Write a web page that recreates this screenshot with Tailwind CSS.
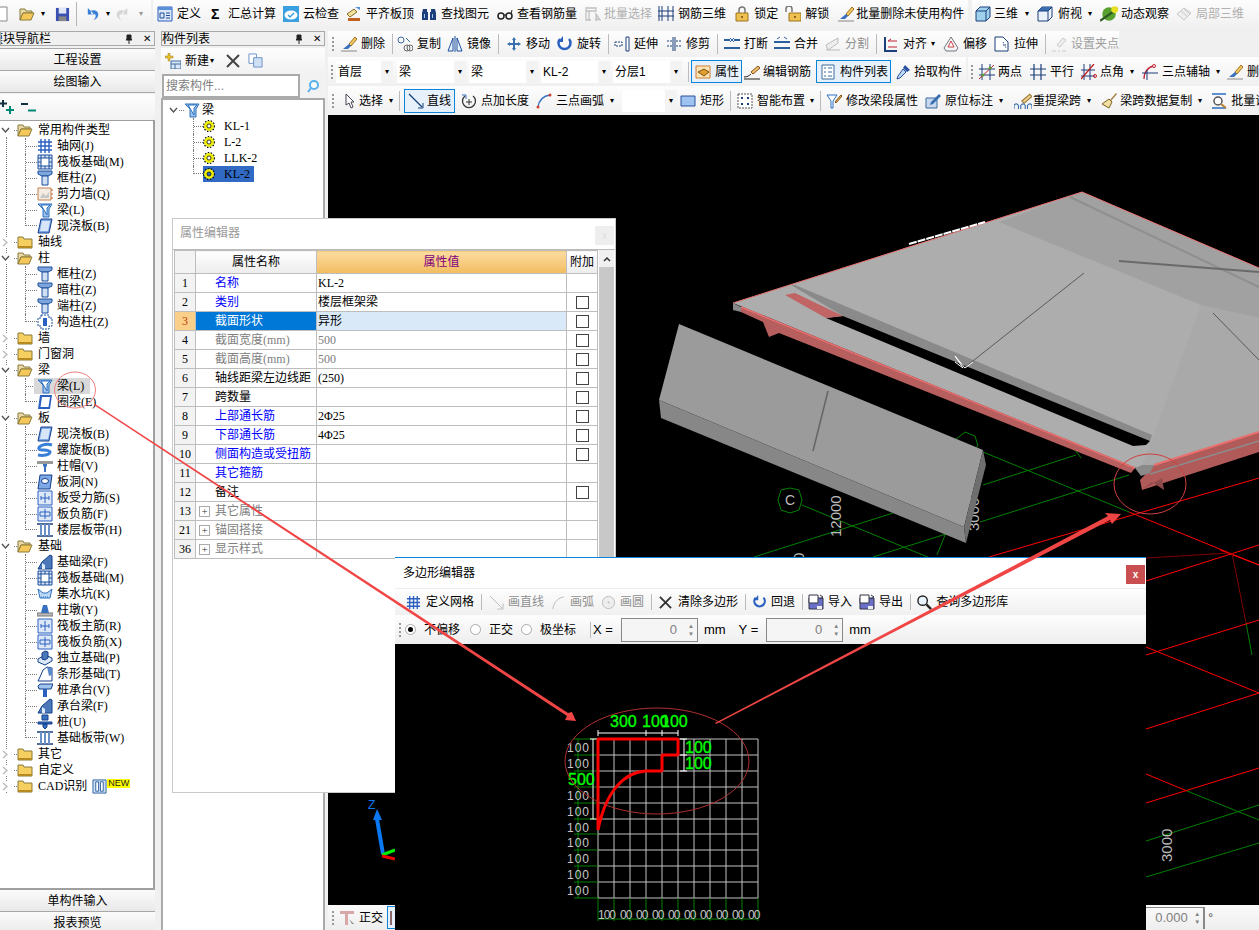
<!DOCTYPE html>
<html lang="zh">
  <head>
    <meta charset="UTF-8" />
    <title>钢筋算量</title>
    <script src="https://cdn.jsdelivr.net/npm/@tailwindcss/browser@4"></script>
  </head>

  <body class="bg-[#f0f0f0] text-[12px] leading-4 text-black font-['Liberation_Sans','Noto_Sans_CJK_SC',sans-serif]">
    <!-- Icon sprites -->
    <svg class="hidden">
      <symbol id="folder" viewBox="0 0 16 16"><path d="M1 3h5l1 2h8v9H1z" fill="#f5cf5f" stroke="#8a7a3a"/><path d="M1 12h14v2H1z" fill="#b58a20"/></symbol>
      <symbol id="folderopen" viewBox="0 0 16 16"><path d="M1 3h5l1 2h6v2H4l-3 7z" fill="#e8d9a8" stroke="#8a7a3a"/><path d="M4 7h11l-3 7H1z" fill="#f3c858" stroke="#8a7a3a"/></symbol>
      <symbol id="grid" viewBox="0 0 16 16"><path d="M1 4h14M1 8h14M1 12h14M4 1v14M8 1v14M12 1v14" stroke="#2a60c0" stroke-width="1.4" fill="none"/></symbol>
      <symbol id="raft" viewBox="0 0 16 16"><path d="M1 1h14v14H1z" fill="#dce8f8" stroke="#1c4f9c"/><path d="M4 4h8v8H4z" fill="#fff" stroke="#1c4f9c"/><path d="M1 4h3M1 8h3M1 12h3M12 4h3M12 8h3M12 12h3M4 1v3M8 1v3M12 1v3M4 12v3M8 12v3M12 12v3" stroke="#1c4f9c"/></symbol>
      <symbol id="col" viewBox="0 0 16 16"><path d="M1 1h14v3l-4 2H5L1 4z" fill="#7ea6dc" stroke="#1c4f9c"/><path d="M5 6h6v9H5z" fill="#cfe0f5" stroke="#1c4f9c"/></symbol>
      <symbol id="wall" viewBox="0 0 16 16"><path d="M1 2h13v12H1z" fill="#f4ece2" stroke="#c08050"/><path d="M3 12l3-5 3 3 3-4v6z" fill="#c8c8c8"/><path d="M14 4h2M14 8h2M14 12h2" stroke="#d06020"/></symbol>
      <symbol id="beam" viewBox="0 0 16 16"><path d="M1 2h14l-3 5v8H6V7z" fill="#9fc3ea" stroke="#2a70c0"/><path d="M4 3l6 10V6l3-3z" fill="#fff" stroke="#2a70c0"/></symbol>
      <symbol id="slab" viewBox="0 0 16 16"><path d="M4 1h11l-3 14H1z" fill="#7ea9e6" stroke="#123f8c"/><path d="M5 3h8l-2 10H3z" fill="#d8e6fa"/></symbol>
      <symbol id="gcol" viewBox="0 0 16 16"><path d="M4 1h8v3h3v8h-3v3H4v-3H1V4h3z" fill="#fff" stroke="#1c4f9c" stroke-dasharray="2 1"/><path d="M6 4h4v8H6z" fill="#2a60c0"/></symbol>
      <symbol id="ring" viewBox="0 0 16 16"><path d="M3 1h12l-2 14H1z" fill="#2a60c0"/><path d="M5 3h8l-1.500 10H3.500z" fill="#fff"/></symbol>
      <symbol id="spiral" viewBox="0 0 16 16"><path d="M15 3C8 1 1 4 2 7c1 2 10 0 11 3 0 3-7 4-12 3" fill="none" stroke="#3a80d8" stroke-width="3"/></symbol>
      <symbol id="cap" viewBox="0 0 16 16"><path d="M0 3h16v3H0z" fill="#999"/><path d="M6 6h4v2L9 9v5H7V9L6 8z" fill="#3a70c0"/></symbol>
      <symbol id="hole" viewBox="0 0 16 16"><path d="M3 1h12l-2 14H1z" fill="#7ea9e6" stroke="#123f8c"/><ellipse cx="8" cy="7" rx="3.500" ry="2.500" fill="#fff" stroke="#123f8c"/></symbol>
      <symbol id="srebar" viewBox="0 0 16 16"><path d="M1 1h14v14H1z" fill="#dce8f8" stroke="#2a60c0"/><path d="M8 3v10M4 8h8M4 6v4M12 6v4" stroke="#2a60c0" fill="none"/></symbol>
      <symbol id="nrebar" viewBox="0 0 16 16"><path d="M1 1h14v14H1z" fill="#dce8f8" stroke="#2a60c0"/><path d="M3 6h10M3 10h10M8 3v10M3 6v4M13 6v4" stroke="#2a60c0" fill="none"/></symbol>
      <symbol id="band" viewBox="0 0 16 16"><path d="M0 2h16M0 14h16" stroke="#1c3f7c" stroke-width="1.500"/><path d="M4 2v12M8 2v12M12 2v12" stroke="#6a90c8" stroke-width="2"/></symbol>
      <symbol id="fbeam" viewBox="0 0 16 16"><path d="M1 15l4-7 8-7 2 1v13H1z" fill="#4a78b8" stroke="#123f8c"/><path d="M5 15V9l3 2v4z" fill="#dfe9f8"/></symbol>
      <symbol id="pit" viewBox="0 0 16 16"><path d="M1 3l5 4h4l5-4-2 9H3z" fill="#bcd8f4" stroke="#2a70c0"/><path d="M4 11h8" stroke="#2a70c0" stroke-dasharray="1 1"/></symbol>
      <symbol id="pier" viewBox="0 0 16 16"><path d="M0 11h16v3H0z" fill="#bbb" stroke="#777"/><path d="M6 3h4l2 8H4z" fill="#3a70c0"/></symbol>
      <symbol id="iso" viewBox="0 0 16 16"><path d="M1 9l7-4 7 3v3l-7 4-7-3z" fill="#dce8f8" stroke="#123f8c"/><path d="M5 3l3-2 3 1v6l-3 2-3-1z" fill="#4a78b8" stroke="#123f8c"/></symbol>
      <symbol id="stripf" viewBox="0 0 16 16"><path d="M1 15l2-4 3-7 4-3 5 1v13z" fill="#fff" stroke="#123f8c"/><path d="M10 1l5 1v7l-3 1z" fill="#5a88c8"/></symbol>
      <symbol id="capf" viewBox="0 0 16 16"><path d="M1 4l2-2h13l-2 5H2z" fill="#9fc3ea" stroke="#123f8c"/><path d="M6 7h4v8H6z" fill="#2a60c0"/></symbol>
      <symbol id="pile" viewBox="0 0 16 16"><path d="M5 1h6v5H5zM1 8h14v2H1zM6 10h4v3l-2 2-2-2z" fill="#3a70c0" stroke="#123f8c"/></symbol>
      <symbol id="def" viewBox="0 0 16 16"><path d="M1 1h14v14H1z" fill="#dce8f8" stroke="#2a60c0"/><path d="M1 1h14v3H1z" fill="#5a90d8"/><path d="M3 7h4v5H3zM9 7h4M9 9.500h4M9 12h4" stroke="#1c4f9c" fill="none"/></symbol>
      <symbol id="cloud" viewBox="0 0 16 16"><path d="M0 0h16v16H0z" fill="#3aa0e0"/><ellipse cx="8" cy="9" rx="6.500" ry="4.500" fill="#fff"/><path d="M5 9l2 2 4-4" stroke="#3aa0e0" stroke-width="1.500" fill="none"/></symbol>
      <symbol id="align" viewBox="0 0 16 16"><path d="M1 8l7-5 3 3-7 5z" fill="#f0e0a0" stroke="#8a6a20"/><path d="M9 1l5 0v3z" fill="#5a90d8"/><path d="M2 12h12v3H2z" fill="#c06020"/></symbol>
      <symbol id="binoc" viewBox="0 0 16 16"><path d="M2 3h4v3l1 0v8H1V7zM14 3h-4v3H9v8h6V7z" fill="#1c3f7c"/><path d="M3 8h1v4H3zM11 8h1v4h-1z" fill="#9fc3ea"/></symbol>
      <symbol id="glasses" viewBox="0 0 16 16"><circle cx="4" cy="10" r="3" fill="none" stroke="#222" stroke-width="1.500"/><circle cx="12" cy="10" r="3" fill="none" stroke="#222" stroke-width="1.500"/><path d="M7 9h2M14 8l1-4" stroke="#222"/></symbol>
      <symbol id="batch" viewBox="0 0 16 16"><path d="M1 2h10v3H1zM1 5v9h5M4 5v9M11 8l4 6-3-1-1 2z" fill="none" stroke="#c0c0c0" stroke-width="1.300"/></symbol>
      <symbol id="rebar3d" viewBox="0 0 16 16"><path d="M0 5h16M0 10h16M4 0v15M10 0v15M1 0v15M15 0v15" stroke="#1c3f7c" fill="none"/></symbol>
      <symbol id="lock" viewBox="0 0 16 16"><path d="M5 7V4a3 3 0 0 1 6 0v3" fill="none" stroke="#777" stroke-width="1.500"/><path d="M2 7h12v8H2z" fill="#efc050" stroke="#9a7420"/><circle cx="8" cy="11" r="1" fill="#6a4a10"/></symbol>
      <symbol id="unlock" viewBox="0 0 16 16"><path d="M1 6V3a3 3 0 0 1 6 0v3" fill="none" stroke="#777" stroke-width="1.500"/><path d="M4 7h12v8H4z" fill="#efc050" stroke="#9a7420"/><circle cx="10" cy="11" r="1" fill="#6a4a10"/></symbol>
      <symbol id="brush" viewBox="0 0 16 16"><path d="M14 1l2 2-6 7-2-2z" fill="#f0c860" stroke="#a07020"/><path d="M8 8l2 2-3 3H2z" fill="#3a70c0"/><path d="M0 15h16" stroke="#888"/></symbol>
      <symbol id="cube" viewBox="0 0 16 16"><path d="M1 5l4-4h10v10l-4 4H1z" fill="#9fd0ec" stroke="#1c3f7c"/><path d="M1 5h10v10M11 5l4-4" fill="none" stroke="#1c3f7c"/></symbol>
      <symbol id="cubetop" viewBox="0 0 16 16"><path d="M1 5l4-4h10v10l-4 4H1z" fill="#eaf2fb" stroke="#1c3f7c"/><path d="M1 5l4-4h10l-4 4z" fill="#3a70b0"/><path d="M1 5h10v10M11 5l4-4" fill="none" stroke="#1c3f7c"/></symbol>
      <symbol id="orbit" viewBox="0 0 16 16"><circle cx="8" cy="8" r="6" fill="#58a030"/><path d="M0 14L16 3" stroke="#2a5a20" stroke-width="2"/><circle cx="13" cy="4" r="3" fill="#e8e020"/></symbol>
      <symbol id="local3d" viewBox="0 0 16 16"><path d="M1 8l7-6 7 5-7 7z" fill="#eee" stroke="#c8c8c8"/><path d="M5 5l7 6M8 3l6 5" stroke="#c8c8c8"/></symbol>
      <symbol id="copy" viewBox="0 0 16 16"><circle cx="4" cy="4" r="3" fill="none" stroke="#3a6a9c"/><circle cx="10" cy="12" r="3" fill="none" stroke="#666"/><circle cx="13" cy="12" r="3" fill="none" stroke="#666"/><path d="M9 2l4 4" stroke="#3a6a9c"/></symbol>
      <symbol id="mirror" viewBox="0 0 16 16"><path d="M6 2L1 15h5zM10 2l5 13h-5z" fill="#eaf2fb" stroke="#1c4f9c"/><path d="M8 0v16" stroke="#1c4f9c"/></symbol>
      <symbol id="move" viewBox="0 0 16 16"><path d="M8 1l2 3H9v3h3V6l3 2-3 2V9H9v3h1l-2 3-2-3h1V9H4v1L1 8l3-2v1h3V4H6z" fill="#3a70b0"/></symbol>
      <symbol id="rotate" viewBox="0 0 16 16"><path d="M3 3a6 6 0 1 0 9 0" fill="none" stroke="#2a60c0" stroke-width="2.500"/><path d="M6 0v6H1z" fill="#2a60c0"/></symbol>
      <symbol id="extend" viewBox="0 0 16 16"><path d="M1 6h7v4H1z" fill="none" stroke="#1c3f7c" stroke-dasharray="2 1"/><path d="M12 1h3v14h-3z" fill="#fff" stroke="#1c3f7c"/></symbol>
      <symbol id="trim" viewBox="0 0 16 16"><path d="M1 5h6M1 10h6M10 5h5M10 10h5" stroke="#1c3f7c" stroke-dasharray="2 1"/><path d="M7 1v14M9 1v14" stroke="#1c3f7c"/></symbol>
      <symbol id="break" viewBox="0 0 16 16"><path d="M0 4h6M10 4h6M0 12h16" stroke="#2a60a0" stroke-width="2"/><path d="M6 2l2 2-2 2M10 2L8 4l2 2" stroke="#2a60a0" fill="none"/></symbol>
      <symbol id="merge" viewBox="0 0 16 16"><path d="M0 6h16M0 12h16" stroke="#2a60a0" stroke-width="2"/><path d="M3 3l3-2M13 3l-3-2" stroke="#2a60a0"/></symbol>
      <symbol id="split" viewBox="0 0 16 16"><path d="M1 9l12-7v5L3 14z" fill="#eee" stroke="#bbb"/><path d="M1 14h14" stroke="#bbb"/></symbol>
      <symbol id="alignl" viewBox="0 0 16 16"><path d="M2 1v14h12" stroke="#1c3f7c" stroke-width="2" fill="none"/><path d="M5 5h9M5 5l3-2M5 11h9" stroke="#c02030" fill="none"/></symbol>
      <symbol id="offset" viewBox="0 0 16 16"><path d="M8 1l7 11-2 3H3l-2-3z" fill="#f0f4f8" stroke="#777"/><path d="M8 5l3 6H5z" fill="#fff" stroke="#d04040"/></symbol>
      <symbol id="stretch" viewBox="0 0 16 16"><path d="M1 1h8l5 5v9H1z" fill="#fff" stroke="#1c3f7c"/><path d="M9 6l3 6M9 9h3" stroke="#1c3f7c" stroke-dasharray="1 1"/></symbol>
      <symbol id="pin" viewBox="0 0 16 16"><path d="M1 15h4M11 15h4M7 15h2" stroke="#ccc"/><path d="M6 9l6-7 3 2-6 7z" fill="#eee" stroke="#ccc"/></symbol>
      <symbol id="prop" viewBox="0 0 16 16"><path d="M1 2h14v12H1z" fill="#fbe3b8" stroke="#d08030"/><path d="M3 8l6-3 5 3-5 4z" fill="#e0a030" stroke="#805010"/></symbol>
      <symbol id="pencil" viewBox="0 0 16 16"><path d="M7 8l7-6 2 2-7 6z" fill="#f0c070" stroke="#805010"/><path d="M0 13c3 0 5-1 7-3M0 15h16" stroke="#222" fill="none"/></symbol>
      <symbol id="list" viewBox="0 0 16 16"><path d="M2 1h12v14H2z" fill="#fff" stroke="#3a6a9c"/><path d="M4 4h2M4 8h2M4 12h2M8 4h4M8 8h4M8 12h4" stroke="#3a6a9c"/></symbol>
      <symbol id="dropper" viewBox="0 0 16 16"><path d="M10 1l5 5-3 2-4-4z" fill="#2a50a0"/><path d="M8 5l3 3-6 6-3 1 1-3z" fill="#bcd8f4" stroke="#2a50a0"/></symbol>
      <symbol id="twopt" viewBox="0 0 16 16"><path d="M3 0v16M11 0v16M0 11h16M0 5h16" stroke="#1c3f7c"/><path d="M0 15L15 1" stroke="#c02020"/><circle cx="11" cy="4" r="1.500" fill="#58a030"/><circle cx="4" cy="11" r="1.500" fill="#58a030"/></symbol>
      <symbol id="parallel" viewBox="0 0 16 16"><path d="M4 0v16M11 0v16M0 5h16M0 11h16" stroke="#1c3f7c" stroke-width="1.200"/></symbol>
      <symbol id="angle" viewBox="0 0 16 16"><path d="M3 0v16M9 0v16M0 6h14M0 12h14" stroke="#1c3f7c"/><path d="M0 15L13 0" stroke="#c02020" stroke-width="1.300"/><circle cx="14" cy="12" r="1.500" fill="none" stroke="#c02020"/></symbol>
      <symbol id="arcaxis" viewBox="0 0 16 16"><path d="M2 15C2 8 6 3 12 2" fill="none" stroke="#c02030" stroke-width="1.300"/><circle cx="12" cy="2" r="1.500" fill="#fff" stroke="#c02030"/><path d="M0 9h16M5 6v10" stroke="#1c3f7c"/></symbol>
      <symbol id="cursor" viewBox="0 0 16 16"><path d="M5 1v11l3-2 2 5 2-1-2-5h3z" fill="#fff" stroke="#445"/></symbol>
      <symbol id="line" viewBox="0 0 16 16"><path d="M1 1l13 13" stroke="#123f7c" stroke-width="1.300"/><path d="M10 15h5v-5" stroke="#123f7c" fill="none"/></symbol>
      <symbol id="addlen" viewBox="0 0 16 16"><path d="M4 3a6.500 6.500 0 1 0 8 0" fill="none" stroke="#333" stroke-width="1.300"/><path d="M8 6v6M5 9h6" stroke="#333"/><path d="M1 2h4v4" stroke="#3a70c0" fill="none"/></symbol>
      <symbol id="arc" viewBox="0 0 16 16"><path d="M2 14C3 7 7 3 14 2" fill="none" stroke="#3a70c0" stroke-width="1.300"/><circle cx="2" cy="14" r="1.500" fill="#d04030"/><circle cx="14" cy="2" r="1.500" fill="#d04030"/></symbol>
      <symbol id="rect" viewBox="0 0 16 16"><path d="M1 3h14v10H1z" fill="#9fc3f0" stroke="#2a50a0"/></symbol>
      <symbol id="smart" viewBox="0 0 16 16"><path d="M1 1h14v14H1z" fill="#fff" stroke="#555" stroke-dasharray="2 1"/><path d="M4 4h2v2H4zM10 4h2v2h-2zM4 10h2v2H4zM10 10h2v2h-2z" fill="#1c3f7c"/></symbol>
      <symbol id="modbeam" viewBox="0 0 16 16"><path d="M1 2h10L7 8v7H5V8z" fill="#fff" stroke="#2a70c0"/><path d="M9 9l6-7 1 1-6 7z" fill="#f0c060" stroke="#805010"/></symbol>
      <symbol id="inplace" viewBox="0 0 16 16"><path d="M1 5h11v10H1z" fill="#c8d8f0" stroke="#3a6a9c"/><path d="M6 9l8-8 2 2-8 8-3 1z" fill="#3a70b0"/></symbol>
      <symbol id="respan" viewBox="0 0 16 16"><path d="M7 8l7-6 2 2-7 6z" fill="#f0d090" stroke="#a08040"/><path d="M0 15v-3q2-3 4 0v3M6 15v-3q2-3 4 0v3M12 15v-3q2-3 4 0v3" stroke="#3a70b0" fill="none"/></symbol>
      <symbol id="broom" viewBox="0 0 16 16"><path d="M15 0l1 1-6 7-1-1z" fill="#a08040"/><path d="M8 6l3 3-3 6-7-4z" fill="#f0e0a0" stroke="#806020"/></symbol>
      <symbol id="fix" viewBox="0 0 16 16"><path d="M1 1h14M1 15h14" stroke="#2a70c0" stroke-width="1.500"/><circle cx="7" cy="8" r="4" fill="#fff" stroke="#555" stroke-width="1.500"/><path d="M10 11l5 4" stroke="#c08030" stroke-width="2"/></symbol>
      <symbol id="magnify" viewBox="0 0 16 16"><circle cx="6" cy="6" r="5" fill="#e8f4ff" stroke="#222" stroke-width="1.500"/><path d="M10 10l5 5" stroke="#222" stroke-width="2.500"/></symbol>
      <symbol id="floppyin" viewBox="0 0 16 16"><path d="M1 4h14v11H1z" fill="#6a70c8" stroke="#334"/><path d="M1 1h9v8H1z" fill="#fff" stroke="#334"/><path d="M9 12h5v3H9z" fill="#eee"/><path d="M12 1l3 2-3 2" stroke="#334" fill="none"/></symbol>
      <symbol id="gear" viewBox="0 0 12 12"><circle cx="6" cy="6" r="3.500" fill="none" stroke="#eeee00" stroke-width="3"/><circle cx="6" cy="6" r="5.500" fill="none" stroke="#111" stroke-width="1.200" stroke-dasharray="1.500 1.500"/><circle cx="6" cy="6" r="2" fill="none" stroke="#111" stroke-width=".8"/></symbol>
    </svg>

    <div class="relative flex h-[930px] w-[1259px] flex-col overflow-hidden">
      <!-- Top toolbar -->
      <header class="flex h-[31px] shrink-0 items-start">
        <div class="flex h-[28px] w-[151px] items-center bg-linear-to-b from-[#fdfdfd] to-[#f0f0f0]">
          <svg class="-ml-2 size-4"><path d="M1 1h14v14H1z" fill="#fff" stroke="#888"/></svg>
          <svg class="ml-[11px] size-4"><use href="#folderopen"/></svg>
          <span class="ml-[6px] text-[8px]">▾</span>
          <svg class="ml-[10px] size-[15px]" viewBox="0 0 16 16"><path d="M1 1h14v14H1z" fill="#3a50b0"/><path d="M4 1h8v6H4z" fill="#dfe6f8"/><path d="M4 10h8v5H4z" fill="#888"/></svg>
          <i class="ml-[6px] h-[24px] w-px bg-[#b5b5b5]"></i>
          <svg class="ml-[8px] size-[15px]" viewBox="0 0 16 16"><path d="M3 1v7h7zM6 4c5-2 9 1 8 5-.5 2-2 4-5 5 2-2 3-4 2-6-1-1-3-1-4 0z" fill="#3a80d8"/></svg>
          <span class="ml-[6px] text-[8px]">▾</span>
          <svg class="ml-[5px] size-[15px]" viewBox="0 0 16 16"><path d="M13 1v7H6zM10 4C5 2 1 5 2 9c.5 2 2 4 5 5-2-2-3-4-2-6 1-1 3-1 4 0z" fill="#d5d5d5"/></svg>
          <span class="ml-[9px] text-[8px] text-[#999]">▾</span>
        </div>
        <div class="ml-[2px] flex h-[28px] w-[815px] items-center gap-[7px] bg-linear-to-b from-[#fdfdfd] to-[#f0f0f0] pl-[4px] whitespace-nowrap">
          <span class="flex items-center gap-[4px]"><svg class="size-4"><use href="#def"/></svg>定义</span>
          <span class="ml-[3px] flex items-center gap-[7px]"><b class="w-[10px] text-[14px] leading-4 font-bold">Σ</b>汇总计算</span>
          <span class="flex items-center gap-[4px]"><svg class="size-4"><use href="#cloud"/></svg>云检查</span>
          <span class="flex items-center gap-[4px]"><svg class="size-4"><use href="#align"/></svg>平齐板顶</span>
          <span class="flex items-center gap-[4px]"><svg class="size-4"><use href="#binoc"/></svg>查找图元</span>
          <span class="ml-[1px] flex items-center gap-[4px]"><svg class="size-4"><use href="#glasses"/></svg>查看钢筋量</span>
          <span class="ml-[1px] flex items-center gap-[3px] text-[#b0b0b0]"><svg class="size-4"><use href="#batch"/></svg>批量选择</span>
          <span class="ml-[-1px] flex items-center gap-[4px]"><svg class="size-4"><use href="#rebar3d"/></svg>钢筋三维</span>
          <span class="ml-[1px] flex items-center gap-[4px]"><svg class="size-4"><use href="#lock"/></svg>锁定</span>
          <span class="flex items-center gap-[4px]"><svg class="size-4"><use href="#unlock"/></svg>解锁</span>
          <span class="ml-[2px] flex items-center gap-[2px]"><svg class="size-4"><use href="#brush"/></svg>批量删除未使用构件</span>
        </div>
        <div class="ml-[4px] flex h-[28px] flex-1 items-center bg-linear-to-b from-[#fdfdfd] to-[#f0f0f0] pl-[3px] whitespace-nowrap">
          <span class="flex items-center gap-[3px]"><svg class="size-4"><use href="#cube"/></svg>三维</span>
          <span class="ml-[7px] text-[8px]">▾</span>
          <span class="ml-[8px] flex items-center gap-[5px]"><svg class="size-4"><use href="#cubetop"/></svg>俯视</span>
          <span class="ml-[6px] text-[8px]">▾</span>
          <span class="ml-[8px] flex items-center gap-[3px]"><svg class="size-[18px]"><use href="#orbit"/></svg>动态观察</span>
          <span class="ml-[7px] flex items-center gap-[4px] text-[#b0b0b0]"><svg class="size-4"><use href="#local3d"/></svg>局部三维</span>
        </div>
      </header>

      <div class="flex min-h-0 flex-1">
        <!-- Module navigator -->
        <aside class="flex w-[155px] shrink-0 flex-col">
          <div class="flex h-[15px] items-center justify-between overflow-hidden border border-[#a8a8a8] pr-[3px]">
            <span class="-ml-[10px] whitespace-nowrap">模块导航栏</span>
            <span class="flex items-center gap-[9px] text-[10px]"><svg class="size-[10px]" viewBox="0 0 10 10"><path d="M3 1h4v4l1 1H2l1-1zM5 6v4" fill="#222" stroke="#222"/></svg><span>✕</span></span>
          </div>
          <button class="mt-[2px] h-[23px] border-y border-[#a8a8a8] bg-linear-to-b from-[#fbfbfb] to-[#e9e9e9]">工程设置</button>
          <button class="h-[22px] border-b border-[#a8a8a8] bg-linear-to-b from-[#fbfbfb] to-[#e9e9e9]">绘图输入</button>
          <div class="mt-[1px] flex h-[26px] items-center gap-[7px] bg-linear-to-b from-[#fdfdfd] to-[#f2f2f2]">
            <svg class="size-[14px]" viewBox="0 0 14 14"><path d="M3 0v7M0 3.500h7" stroke="#134" stroke-width="2"/><path d="M10 6v8M6 10h8" stroke="#087" stroke-width="2"/></svg>
            <svg class="size-[15px]" viewBox="0 0 15 14"><path d="M0 3.500h7" stroke="#134" stroke-width="2"/><path d="M7 10h8" stroke="#087" stroke-width="2"/></svg>
          </div>
          <div id="navTree" class="relative min-h-0 flex-1 overflow-hidden border-t border-r-2 border-b-2 border-[#a0a0a0] bg-white pt-[1px] font-['Liberation_Serif','Noto_Sans_CJK_SC',serif]"></div>
          <button class="h-[22px] border-b border-[#a8a8a8] bg-linear-to-b from-[#fbfbfb] to-[#e9e9e9]">单构件输入</button>
          <button class="-mb-[4px] h-[22px] bg-linear-to-b from-[#fbfbfb] to-[#e9e9e9]">报表预览</button>
        </aside>

        <!-- Component list -->
        <aside class="ml-[6px] flex w-[164px] shrink-0 flex-col">
          <div class="flex h-[15px] items-center justify-between border border-[#a8a8a8] pr-[3px]">
            <span class="whitespace-nowrap">构件列表</span>
            <span class="flex items-center gap-[9px] text-[10px]"><svg class="size-[10px]" viewBox="0 0 10 10"><path d="M3 1h4v4l1 1H2l1-1zM5 6v4" fill="#222" stroke="#222"/></svg><span>✕</span></span>
          </div>
          <div class="mt-[2px] flex h-[25px] items-center bg-linear-to-b from-[#fdfdfd] to-[#f2f2f2] pl-[4px]">
            <svg class="size-4" viewBox="0 0 16 16"><path d="M3 0h2v3h3v2H5v3H3V5H0V3h3z" fill="#e8c030" stroke="#a08020" stroke-width=".5"/><path d="M6 8h10v8H6z" fill="#dce8f8" stroke="#3a6a9c"/><path d="M6 11h10M10 11v5" stroke="#3a6a9c"/></svg>
            <span class="ml-[4px]">新建</span><span class="ml-[1px] text-[8px]">▾</span>
            <svg class="ml-[12px] size-[14px]" viewBox="0 0 14 14"><path d="M1 1l12 12M13 1L1 13" stroke="#444" stroke-width="2"/></svg>
            <svg class="ml-[8px] size-[15px]" viewBox="0 0 16 16"><path d="M1 1h8v10H1z" fill="#fff" stroke="#6a90c8"/><path d="M6 5h9v10H6z" fill="#cfe0f5" stroke="#6a90c8"/></svg>
          </div>
          <div class="flex h-[25px] items-center bg-[#f2f2f2]">
            <span class="ml-[1px] flex h-[24px] w-[138px] items-center border-2 border-[#aaa] bg-white pl-[2px] text-[#808080]">搜索构件...</span>
            <svg class="ml-[6px] size-[14px]" viewBox="0 0 14 14"><circle cx="8" cy="6" r="4" fill="#fff" stroke="#5ab0ec" stroke-width="2"/><path d="M5 9l-3 4" stroke="#5ab0ec" stroke-width="2"/></svg>
          </div>
          <div class="min-h-0 flex-1 border-x-2 border-t-2 border-[#aaa] bg-white pt-[1px] font-['Liberation_Serif','Noto_Sans_CJK_SC',serif]">
            <div class="mt-[1px] flex h-4 items-center"><svg class="ml-[6px] size-[9px]" viewBox="0 0 9 9"><path d="M1 2l3.500 4L8 2" fill="none" stroke="#555" stroke-width="1.400"/></svg><i class="ml-[1px] w-[5px] border-t border-dotted border-[#777]"></i><svg class="size-4"><use href="#beam"/></svg><span class="ml-[2px]">梁</span></div>
            <div class="flex h-4 items-center"><span class="ml-[30px] flex h-4 w-[10px] items-center border-l border-dotted border-[#777]"><i class="w-full border-t border-dotted border-[#777]"></i></span><svg class="size-[12px]"><use href="#gear"/></svg><span class="ml-[9px]">KL-1</span></div>
            <div class="flex h-4 items-center"><span class="ml-[30px] flex h-4 w-[10px] items-center border-l border-dotted border-[#777]"><i class="w-full border-t border-dotted border-[#777]"></i></span><svg class="size-[12px]"><use href="#gear"/></svg><span class="ml-[9px]">L-2</span></div>
            <div class="flex h-4 items-center"><span class="ml-[30px] flex h-4 w-[10px] items-center border-l border-dotted border-[#777]"><i class="w-full border-t border-dotted border-[#777]"></i></span><svg class="size-[12px]"><use href="#gear"/></svg><span class="ml-[9px]">LLK-2</span></div>
            <div class="flex h-4 items-start"><span class="ml-[30px] flex h-2 w-[10px] items-end border-l border-dotted border-[#777]"><i class="w-full border-t border-dotted border-[#777]"></i></span><span class="flex h-4 w-[51px] items-center bg-[#316ac5]"><svg class="size-[12px]"><use href="#gear"/></svg><span class="ml-[9px]">KL-2</span></span></div>
          </div>
        </aside>

        <!-- Drawing area -->
        <main class="ml-[3px] flex min-w-0 flex-1 flex-col">
          <!-- edit bar -->
          <div class="flex h-[26px] w-[791px] items-center gap-[7px] bg-linear-to-b from-[#fdfdfd] to-[#f0f0f0] pb-[1px] pl-[4px] whitespace-nowrap">
            <i class="h-[14px] border-l-2 border-dotted border-[#999]"></i>
            <span class="flex items-center gap-[4px]"><svg class="size-4"><use href="#brush"/></svg>删除</span><i class="h-5 w-px bg-[#bbb]"></i>
            <span class="-ml-[3px] flex items-center gap-[4px]"><svg class="size-4"><use href="#copy"/></svg>复制</span>
            <span class="-ml-[1px] flex items-center gap-[4px]"><svg class="size-4"><use href="#mirror"/></svg>镜像</span><i class="h-5 w-px bg-[#bbb]"></i>
            <span class="flex items-center gap-[4px]"><svg class="size-4"><use href="#move"/></svg>移动</span>
            <span class="flex items-center gap-[4px]"><svg class="size-4"><use href="#rotate"/></svg>旋转</span><i class="h-5 w-px bg-[#bbb]"></i>
            <span class="-ml-[2px] flex items-center gap-[4px]"><svg class="size-4"><use href="#extend"/></svg>延伸</span>
            <span class="ml-[1px] flex items-center gap-[4px]"><svg class="size-4"><use href="#trim"/></svg>修剪</span><i class="h-5 w-px bg-[#bbb]"></i>
            <span class="-ml-[1px] flex items-center gap-[4px]"><svg class="size-4"><use href="#break"/></svg>打断</span>
            <span class="-ml-[1px] flex items-center gap-[4px]"><svg class="size-4"><use href="#merge"/></svg>合并</span>
            <span class="flex items-center gap-[4px] text-[#909090]"><svg class="size-4"><use href="#split"/></svg>分割</span><i class="h-5 w-px bg-[#bbb]"></i>
            <span class="-ml-[1px] flex items-center gap-[4px]"><svg class="size-4"><use href="#alignl"/></svg>对齐<em class="text-[8px] not-italic">▾</em></span>
            <span class="ml-[1px] flex items-center gap-[4px]"><svg class="size-4"><use href="#offset"/></svg>偏移</span>
            <span class="flex items-center gap-[4px]"><svg class="size-4"><use href="#stretch"/></svg>拉伸</span><i class="h-5 w-px bg-[#bbb]"></i>
            <span class="-ml-[2px] flex items-center gap-[4px] text-[#a0a0a0]"><svg class="size-4"><use href="#pin"/></svg>设置夹点</span>
          </div>

          <!-- selector bar -->
          <div class="flex h-[29px] items-center whitespace-nowrap">
            <div class="flex h-[29px] w-[639px] items-center bg-linear-to-b from-[#fdfdfd] to-[#f0f0f0] pl-[3px]">
              <i class="mr-[3px] h-[14px] border-l-2 border-dotted border-[#999]"></i>
              <span class="flex h-[22px] w-[57px] items-center justify-between bg-white pl-[2px]">首层<em class="flex h-full w-[12px] items-center justify-center bg-[#f3f3f3] text-[8px] not-italic">▾</em></span>
              <span class="ml-[4px] flex h-[22px] w-[69px] items-center justify-between bg-white pl-[2px]">梁<em class="flex h-full w-[12px] items-center justify-center bg-[#f3f3f3] text-[8px] not-italic">▾</em></span>
              <span class="ml-[3px] flex h-[22px] w-[69px] items-center justify-between bg-white pl-[2px]">梁<em class="flex h-full w-[12px] items-center justify-center bg-[#f3f3f3] text-[8px] not-italic">▾</em></span>
              <span class="ml-[3px] flex h-[22px] w-[69px] items-center justify-between bg-white pl-[2px]">KL-2<em class="flex h-full w-[12px] items-center justify-center bg-[#f3f3f3] text-[8px] not-italic">▾</em></span>
              <span class="ml-[3px] flex h-[22px] w-[69px] items-center justify-between bg-white pl-[2px]">分层1<em class="flex h-full w-[12px] items-center justify-center bg-[#f3f3f3] text-[8px] not-italic">▾</em></span>
              <i class="ml-[6px] h-5 w-px bg-[#bbb]"></i>
              <span class="ml-[2px] flex h-[23px] w-[51px] items-center gap-[4px] border border-[#0a84d8] bg-[#e6f1fb] pl-[3px]"><svg class="size-4"><use href="#prop"/></svg>属性</span>
              <span class="ml-[2px] flex items-center gap-[3px]"><svg class="size-4"><use href="#pencil"/></svg>编辑钢筋</span>
              <span class="ml-[5px] flex h-[23px] w-[75px] items-center gap-[4px] border border-[#0a84d8] bg-[#e6f1fb] pl-[3px]"><svg class="size-4"><use href="#list"/></svg>构件列表</span>
              <span class="ml-[4px] flex items-center gap-[3px]"><svg class="size-4"><use href="#dropper"/></svg>拾取构件</span>
            </div>
            <div class="ml-[2px] flex h-[29px] flex-1 items-center bg-linear-to-b from-[#fdfdfd] to-[#f0f0f0] pl-[3px]">
              <i class="mr-[6px] h-[14px] border-l-2 border-dotted border-[#999]"></i>
              <span class="flex items-center gap-[3px]"><svg class="size-4"><use href="#twopt"/></svg>两点</span>
              <span class="ml-[8px] flex items-center gap-[4px]"><svg class="size-4"><use href="#parallel"/></svg>平行</span>
              <span class="ml-[7px] flex items-center gap-[3px]"><svg class="size-4"><use href="#angle"/></svg>点角</span><em class="ml-[6px] text-[8px] not-italic">▾</em>
              <span class="ml-[8px] flex items-center gap-[4px]"><svg class="size-4"><use href="#arcaxis"/></svg>三点辅轴</span><em class="ml-[6px] text-[8px] not-italic">▾</em>
              <span class="ml-[7px] flex items-center gap-[4px]"><svg class="size-4"><use href="#brush"/></svg>删</span>
            </div>
          </div>

          <!-- beam drawing bar -->
          <div class="flex h-[29px] items-center bg-linear-to-b from-[#fdfdfd] to-[#f0f0f0] pl-[4px] whitespace-nowrap [&>*]:shrink-0">
            <i class="mr-[7px] h-[14px] border-l-2 border-dotted border-[#999]"></i>
            <span class="flex items-center gap-[2px]"><svg class="size-4"><use href="#cursor"/></svg>选择</span><em class="ml-[6px] text-[8px] not-italic">▾</em>
            <i class="ml-[6px] h-5 w-px bg-[#bbb]"></i>
            <span class="ml-[4px] flex h-[24px] w-[51px] items-center gap-[3px] border border-[#0a84d8] bg-[#e6f1fb] pl-[3px]"><svg class="size-4"><use href="#line"/></svg>直线</span>
            <span class="ml-[6px] flex items-center gap-[4px]"><svg class="size-4"><use href="#addlen"/></svg>点加长度</span>
            <span class="ml-[7px] flex items-center gap-[4px]"><svg class="size-4"><use href="#arc"/></svg>三点画弧</span><em class="ml-[6px] text-[8px] not-italic">▾</em>
            <span class="ml-[8px] flex h-[22px] w-[55px] items-center justify-end bg-white"><em class="flex h-full w-[12px] items-center justify-center bg-[#f3f3f3] text-[8px] not-italic">▾</em></span>
            <span class="ml-[3px] flex items-center gap-[4px]"><svg class="size-4"><use href="#rect"/></svg>矩形</span>
            <i class="ml-[6px] h-5 w-px bg-[#bbb]"></i>
            <span class="ml-[6px] flex items-center gap-[4px]"><svg class="size-4"><use href="#smart"/></svg>智能布置<em class="ml-[1px] text-[8px] not-italic">▾</em></span>
            <i class="ml-[6px] h-5 w-px bg-[#bbb]"></i>
            <span class="ml-[5px] flex items-center gap-[4px]"><svg class="size-4"><use href="#modbeam"/></svg>修改梁段属性</span>
            <span class="ml-[7px] flex items-center gap-[4px]"><svg class="size-4"><use href="#inplace"/></svg>原位标注</span><em class="ml-[6px] text-[8px] not-italic">▾</em>
            <span class="ml-[11px] flex items-center gap-[1px]"><svg class="size-[18px]"><use href="#respan"/></svg>重提梁跨</span><em class="ml-[6px] text-[8px] not-italic">▾</em>
            <span class="ml-[10px] flex items-center gap-[3px]"><svg class="size-4"><use href="#broom"/></svg>梁跨数据复制</span><em class="ml-[6px] text-[8px] not-italic">▾</em>
            <span class="ml-[9px] flex items-center gap-[4px]"><svg class="size-4"><use href="#fix"/></svg>批量识</span>
          </div>

          <!-- 3D canvas -->
          <div class="relative min-h-0 flex-1 bg-black">
            <svg class="absolute inset-0 h-full w-full" viewBox="328 115 931 790">
              <g fill="none" stroke="#008000">
                <path d="M802 505L930 558M754 557L893 513M873 557L946 534M980 522L1129 475M983 485L1076 455M983 452L1129 512M1187 791L1259 820M1146 841L1259 805M1146 877L1259 843M1246 623L1252 655M1075 450L1081 458M945 535L937 555"/>
                <polygon points="790,488 799,490 802,500 799,510 790,513 781,510 778,500 781,490"/>
                <polygon points="965,432 975,436 978,446 970,452 958,450 955,440"/>
              </g>
              <g fill="none" stroke="#f00">
                <path d="M1129 512L1259 565M989 557L1259 478M1146 581L1259 545M1146 655L1259 620M1146 729L1259 693M1146 647L1259 693M1146 803L1259 768M1146 774L1187 791M1220 550L1259 565"/>
              </g>
              <path d="M1146 558L1230 553M1232 553L1246 623" fill="none" stroke="#800000"/>
              <g fill="#bcbcbc" font-family="'Liberation Sans',sans-serif" font-size="15">
                <text x="790" y="505" font-size="14" text-anchor="middle">C</text>
                <text x="841" y="537" transform="rotate(-90 841 537)">12000</text>
                <text x="979" y="531" transform="rotate(-90 979 531)">3000</text>
                <text x="804" y="561" transform="rotate(-90 804 561)">0</text>
                <text x="1172" y="862" transform="rotate(-90 1172 862)">3000</text>
              </g>
              <!-- roof -->
              <polygon points="733,303 1082,192 1259,268 1259,432 1141,470" fill="#adadad"/>
              <polygon points="999,222 1082,192 1259,268 1259,318 1201,305" fill="#a1a1a1"/>
              <polygon points="1201,305 1141,470 1259,432 1259,318" fill="#a9a9a9"/>
              <path d="M1070 197L1259 287" stroke="#8f8f8f" stroke-width="2"/>
              <polygon points="791,285 795,285 1152,435 1150,441 843,316" fill="#8a8a8a"/>
              <polygon points="826,318 843,316 1150,441 1146,445 1133,446" fill="#000"/>
              <polygon points="785,295 795,293 843,316 826,318" fill="#c06464"/>
              <polygon points="741,307 1135,468 1131,473 779,333 769,337 763,322 741,312" fill="#b75f5f"/>
              <path d="M741 307L1135 468" stroke="#ea6f6f" stroke-width="1.500"/>
              <polygon points="733,303 741,307 741,312 733,310" fill="#888"/>
              <polygon points="1154,465 1259,432 1259,452 1142,490 1140,480" fill="#b05a5a"/>
              <path d="M1154 465L1259 432" stroke="#ea6f6f" stroke-width="2"/>
              <path d="M1150 474L1259 441" stroke="#8c8c8c" stroke-width="1.500"/>
              <polygon points="1142,490 1162,478 1164,490 1152,482" fill="#8e4a4a"/>
              <polygon points="1135,468 1142,465 1154,465 1150,473 1141,476" fill="#8a8a8a"/>
              <path d="M1082 192L1259 268M733 303L1082 192" stroke="#e87070"/>
              <path d="M1084 273L964 368M1213 313L1259 360" stroke="#5a5a5a" fill="none"/>
              <path d="M1119 261L1259 272" stroke="#6a6a6a" stroke-width="2"/>
              <path d="M909 244L985 222" stroke="#fff" stroke-width="2" stroke-dasharray="8 1"/>
              <path d="M955 362l8 6-8-12 10 12 8-6" stroke="#fff" fill="none"/>
              <!-- loose beam -->
              <polygon points="679,324 983,450 964,527 659,400" fill="#9b9b9b"/>
              <polygon points="659,400 964,527 966,543 661,418" fill="#878787"/>
              <polygon points="983,450 986,465 966,543 964,527" fill="#6f6f6f"/>
              <path d="M828 391L813 451" stroke="#666" stroke-width="1.500"/>
              <!-- axis gizmo -->
              <path d="M377 809l5 11h-9z" fill="#0a78f0"/>
              <path d="M377 819L383 854" stroke="#0a78f0" stroke-width="4"/>
              <path d="M382 855L395 850" stroke="#0e0" stroke-width="3"/>
              <path d="M382 856L395 859" stroke="#e00" stroke-width="3"/>
              <text x="368" y="809" fill="#0a78f0" font-size="12" font-family="'Liberation Sans',sans-serif">Z</text>
            </svg>
          </div>

          <!-- status bar -->
          <div class="flex h-[25px] shrink-0 items-center bg-linear-to-b from-[#fafafa] to-[#eeeeee] pl-[4px]">
            <i class="mr-[5px] h-[14px] border-l-2 border-dotted border-[#999]"></i>
            <svg class="size-4" viewBox="0 0 16 16"><path d="M1 1h14v3H9v11H6V4H1z" fill="#d8a8a8"/><path d="M10 9l5 5-2 0z" fill="#888"/></svg>
            <span class="ml-[4px]">正交</span>
            <span class="ml-[4px] flex h-[23px] w-[12px] items-center border border-[#0a84d8] bg-[#e6f1fb] pl-[2px]"><i class="h-[14px] w-[2px] bg-[#8a6a6a]"></i></span>
            <span class="ml-auto mr-[46px] flex items-center text-[#808080]">
              <span class="flex h-[22px] w-[60px] items-center justify-between border-t border-r-2 border-[#888] pr-[3px]"><span class="ml-[10px] text-[13px]">0.000</span><span class="flex flex-col text-[6px] leading-[8px]"><b>▲</b><b>▼</b></span></span>
              <span class="ml-[3px] text-[#444]">°</span>
            </span>
          </div>
        </main>
      </div>

      <!-- Property editor window -->
      <section class="absolute top-[218px] left-[172px] flex h-[575px] w-[444px] flex-col border border-[#c9c9c9] bg-white">
        <div class="flex h-[30px] shrink-0 items-start justify-between">
          <span class="mt-[6px] ml-[7px] text-[#9a9a9a]">属性编辑器</span>
          <span class="mt-[7px] mr-[1px] flex h-[19px] w-[19px] items-center justify-center bg-[#eeeeee] text-[10px] text-[#ddd]">x</span>
        </div>
        <div class="flex border-t border-[#bbb] pl-[1px]">
          <table class="w-[423px] table-fixed border-collapse font-['Liberation_Serif','Noto_Sans_CJK_SC',serif] [&_td]:h-[19px] [&_td]:overflow-hidden [&_td]:border [&_td]:border-[#bdbdbd] [&_td]:whitespace-nowrap [&_td:first-child]:bg-[#f3f3f3] [&_td:first-child]:text-center [&_td:nth-child(2)]:pl-[19px] [&_td:nth-child(3)]:pl-[1px]">
            <colgroup><col class="w-[21px]" /><col class="w-[121px]" /><col class="w-[250px]" /><col class="w-[31px]" /></colgroup>
            <thead>
              <tr class="h-[23px] font-normal">
                <th class="border border-[#bdbdbd] bg-[#f3f3f3] font-normal"></th>
                <th class="border border-[#bdbdbd] bg-linear-to-b from-white to-[#ececec] font-normal">属性名称</th>
                <th class="border border-[#bdbdbd] bg-linear-to-b from-[#fcdca0] to-[#f2bc5e] font-normal text-[#800080]">属性值</th>
                <th class="border border-[#bdbdbd] bg-linear-to-b from-white to-[#ececec] font-normal">附加</th>
              </tr>
            </thead>
            <tbody id="propRows"></tbody>
          </table>
          <div class="ml-px flex w-[15px] flex-col bg-[#c8c8c8]">
            <span class="flex h-[17px] items-center justify-center bg-[#f0f0f0]"><svg class="size-[8px]" viewBox="0 0 8 8"><path d="M1 6l3-3 3 3" fill="none" stroke="#333" stroke-width="1.500"/></svg></span>
          </div>
        </div>
      </section>

      <!-- Polygon editor window -->
      <section class="absolute top-[557px] left-[395px] flex h-[373px] w-[751px] flex-col border-t border-[#0a84d8] bg-black">
        <div class="flex h-[30px] shrink-0 items-start justify-between bg-white">
          <span class="mt-[7px] ml-[8px]">多边形编辑器</span>
          <span class="mt-[7px] mr-[1px] flex h-[19px] w-[19px] items-center justify-center bg-[#c94f50] text-[10px] font-bold text-white">x</span>
        </div>
        <div class="flex h-[27px] shrink-0 items-center gap-[7px] border-t border-[#eee] bg-linear-to-b from-[#fdfdfd] to-[#f0f0f0] pl-[11px] whitespace-nowrap">
          <span class="flex items-center gap-[5px]"><svg class="size-[15px]"><use href="#grid"/></svg>定义网格</span><i class="h-4 w-px bg-[#bbb]"></i>
          <span class="flex items-center gap-[4px] text-[#909090]"><svg class="size-[15px]" viewBox="0 0 16 16"><path d="M1 1l13 13M9 15h6V9" stroke="#bbb" fill="none"/></svg>画直线</span>
          <span class="flex items-center gap-[4px] text-[#909090]"><svg class="size-[15px]" viewBox="0 0 16 16"><path d="M2 15C3 7 8 3 14 2" stroke="#bbb" fill="none"/></svg>画弧</span>
          <span class="flex items-center gap-[4px] text-[#909090]"><svg class="size-[15px]" viewBox="0 0 16 16"><circle cx="8" cy="8" r="6.500" fill="#eee" stroke="#bbb"/><circle cx="8" cy="8" r="1" fill="#bbb"/></svg>画圆</span><i class="h-4 w-px bg-[#bbb]"></i>
          <span class="flex items-center gap-[6px]"><svg class="size-[13px]" viewBox="0 0 14 14"><path d="M1 1l12 12M13 1L1 13" stroke="#333" stroke-width="2"/></svg>清除多边形</span><i class="h-4 w-px bg-[#bbb]"></i>
          <span class="flex items-center gap-[4px]"><svg class="size-[14px]"><use href="#rotate"/></svg>回退</span><i class="h-4 w-px bg-[#bbb]"></i>
          <span class="-ml-[2px] flex items-center gap-[4px]"><svg class="size-4"><use href="#floppyin"/></svg>导入</span>
          <span class="flex items-center gap-[4px]"><svg class="size-4"><use href="#floppyin"/></svg>导出</span><i class="h-4 w-px bg-[#bbb]"></i>
          <span class="-ml-[1px] flex items-center gap-[4px]"><svg class="size-[15px]"><use href="#magnify"/></svg>查询多边形库</span>
        </div>
        <div class="flex h-[29px] shrink-0 items-center bg-linear-to-b from-[#fdfdfd] to-[#eeeeee] pl-[4px] whitespace-nowrap">
          <i class="mr-[4px] h-[14px] border-l-2 border-dotted border-[#999]"></i>
          <span class="flex size-[11px] items-center justify-center rounded-full border border-[#aaa] bg-white"><i class="size-[5px] rounded-full bg-black"></i></span><span class="ml-[8px]">不偏移</span>
          <span class="ml-[10px] size-[11px] rounded-full border border-[#aaa] bg-white"></span><span class="ml-[8px]">正交</span>
          <span class="ml-[8px] size-[11px] rounded-full border border-[#aaa] bg-white"></span><span class="ml-[8px]">极坐标</span>
          <i class="ml-[14px] h-[16px] w-px bg-[#bbb]"></i>
          <span class="ml-[2px] text-[13px]">X =</span>
          <span class="ml-[8px] flex h-[24px] w-[77px] items-center justify-end border border-[#888] bg-[#f5f5f5] pr-[3px] text-[#808080]"><span class="text-[13px]">0</span><span class="ml-[11px] flex flex-col text-[6px] leading-[8px]"><b>▲</b><b>▼</b></span></span>
          <span class="ml-[6px] text-[13px]">mm</span>
          <span class="ml-[13px] text-[13px]">Y =</span>
          <span class="ml-[8px] flex h-[24px] w-[77px] items-center justify-end border border-[#888] bg-[#f5f5f5] pr-[3px] text-[#808080]"><span class="text-[13px]">0</span><span class="ml-[11px] flex flex-col text-[6px] leading-[8px]"><b>▲</b><b>▼</b></span></span>
          <span class="ml-[6px] text-[13px]">mm</span>
        </div>
        <div class="relative min-h-0 flex-1">
          <svg class="absolute inset-0 h-full w-full" viewBox="395 644 751 286">
            <g stroke="#c4c4c4" fill="none">
              <path d="M598 739H758M598 755H758M598 771H758M598 787H758M598 803H758M598 819H758M598 834H758M598 850H758M598 866H758M598 882H758M598 898H758"/>
              <path d="M598 739V898M614 739V898M630 739V898M646 739V898M662 739V898M678 739V898M694 739V898M710 739V898M726 739V898M742 739V898M758 739V898"/>
            </g>
            <g stroke="#008000" fill="none">
              <path d="M578 739V898M574 739H598M574 755H598M574 771H598M574 787H598M574 803H598M574 819H598M574 834H598M574 850H598M574 866H598M574 882H598M574 898H598"/>
              <path d="M598 919H758M598 898V921M614 898V921M630 898V921M646 898V921M662 898V921M678 898V921M694 898V921M710 898V921M726 898V921M742 898V921M758 898V921"/>
            </g>
            <g fill="#c8c8c8" font-family="'Liberation Sans',sans-serif" font-size="12" letter-spacing="1">
              <text x="567" y="752">100</text><text x="567" y="768">100</text><text x="567" y="800">100</text><text x="567" y="816">100</text><text x="567" y="832">100</text><text x="567" y="847">100</text><text x="567" y="863">100</text><text x="567" y="879">100</text><text x="567" y="895">100</text>
              <text x="598" y="919" letter-spacing="-1">100</text><text x="620" y="919" letter-spacing="-1">00</text><text x="636" y="919" letter-spacing="-1">00</text><text x="652" y="919" letter-spacing="-1">00</text><text x="668" y="919" letter-spacing="-1">00</text><text x="684" y="919" letter-spacing="-1">00</text><text x="700" y="919" letter-spacing="-1">00</text><text x="716" y="919" letter-spacing="-1">00</text><text x="732" y="919" letter-spacing="-1">00</text><text x="748" y="919" letter-spacing="-1">00</text>
            </g>
            <g stroke="#fff" fill="none">
              <path d="M598 733H678M598 730V736M646 730V736M662 730V736M678 730V736M593 739V819M590 739H597M590 819H597M684 739V771M680 739H687M680 755H687M680 771H687"/>
            </g>
            <g fill="#00ff00" stroke="#00ff00" stroke-width=".3" font-family="'Liberation Sans',sans-serif" font-size="16">
              <text x="610" y="727">300</text><text x="642" y="727">100</text><text x="661" y="727">100</text>
              <text x="685" y="753">100</text><text x="685" y="769">100</text><text x="568" y="785">500</text>
            </g>
            <path d="M598 830V739H678V755H662V771H646C625 772 606 790 598 830Z" fill="none" stroke="#f00" stroke-width="3" stroke-linejoin="bevel"/>
          </svg>
        </div>
      </section>

      <!-- Callout annotations -->
      <svg class="pointer-events-none absolute inset-0" width="1259" height="930" viewBox="0 0 1259 930">
        <ellipse cx="75" cy="390" rx="20.500" ry="18" fill="none" stroke="#f08080" stroke-width="1"/>
        <ellipse cx="657" cy="761" rx="92" ry="53" fill="none" stroke="#b03030" stroke-width="1"/>
        <ellipse cx="1150" cy="484" rx="36" ry="30" fill="none" stroke="#d04040" stroke-width="1"/>
        <polygon points="94,405 95,404 568,713 572,712 576,721 565,720 567,716" fill="#f04545"/>
        <polygon points="716,724 715,723 1108,516 1105,513 1121,514 1112,524 1110,520" fill="#f04545"/>
      </svg>
    </div>

    <script>
      // Tree data: [folder name, open?, [[label, icon], ...]]
      const navData = [
        ["常用构件类型", true, [["轴网(J)", "grid"], ["筏板基础(M)", "raft"], ["框柱(Z)", "col"], ["剪力墙(Q)", "wall"], ["梁(L)", "beam"], ["现浇板(B)", "slab"]]],
        ["轴线", false, []],
        ["柱", true, [["框柱(Z)", "col"], ["暗柱(Z)", "col"], ["端柱(Z)", "col"], ["构造柱(Z)", "gcol"]]],
        ["墙", false, []],
        ["门窗洞", false, []],
        ["梁", true, [["梁(L)", "beam"], ["圈梁(E)", "ring"]]],
        ["板", true, [["现浇板(B)", "slab"], ["螺旋板(B)", "spiral"], ["柱帽(V)", "cap"], ["板洞(N)", "hole"], ["板受力筋(S)", "srebar"], ["板负筋(F)", "nrebar"], ["楼层板带(H)", "band"]]],
        ["基础", true, [["基础梁(F)", "fbeam"], ["筏板基础(M)", "raft"], ["集水坑(K)", "pit"], ["柱墩(Y)", "pier"], ["筏板主筋(R)", "srebar"], ["筏板负筋(X)", "nrebar"], ["独立基础(P)", "iso"], ["条形基础(T)", "stripf"], ["桩承台(V)", "capf"], ["承台梁(F)", "fbeam"], ["桩(U)", "pile"], ["基础板带(W)", "band"]]],
        ["其它", false, []],
        ["自定义", false, []],
        ["CAD识别", false, []],
      ];

      let navHtml = `<i class="absolute top-[16px] left-[6px] h-[656px] border-l border-dotted border-[#777]"></i>`;
      navData.forEach(([name, open, kids]) => {
        const chevron = open
          ? `<path d="M1 2l3.500 4L8 2" fill="none" stroke="#555" stroke-width="1.400"/>`
          : `<path d="M2 1l4 3.500L2 8" fill="none" stroke="#bbb" stroke-width="1.400"/>`;
        const extra = name === "CAD识别"
          ? `<svg class="ml-[5px] size-[15px]" viewBox="0 0 16 16"><path d="M1 1h14v14H1z" fill="#cfe0f5" stroke="#2a60a0"/><path d="M4 3h3v10H4zM9 3h3v10H9z" fill="#fff" stroke="#2a60a0"/></svg><span class="mb-[6px] h-[9px] bg-[#ffff00] px-px text-[9px] leading-[9px] text-[#222] font-['Liberation_Sans',sans-serif]">NEW</span>`
          : "";
        navHtml += `<div class="relative flex h-4 items-center bg-transparent"><svg class="ml-[1px] size-[9px] bg-white" viewBox="0 0 9 9">${chevron}</svg><i class="ml-[4px] w-[3px] border-t border-dotted border-[#777]"></i><svg class="size-4"><use href="#${open ? "folderopen" : "folder"}"/></svg><span class="ml-[5px] whitespace-nowrap">${name}</span>${extra}</div>`;
        kids.forEach(([label, icon], i) => {
          const last = i === kids.length - 1;
          const hot = name === "梁" && i === 0;
          navHtml += `<div class="relative flex h-4 ${last ? "items-start" : "items-center"}"><span class="ml-[25px] flex ${last ? "h-2 items-end" : "h-4 items-center"} w-[12px] border-l border-dotted border-[#777]"><i class="w-full border-t border-dotted border-[#777]"></i></span><span class="flex h-4 items-center whitespace-nowrap ${hot ? "w-[56px] -ml-[3px] pl-[3px] bg-[#d9d9d9]" : ""}"><svg class="size-4"><use href="#${icon}"/></svg><span class="ml-[4px]">${label}</span></span></div>`;
        });
      });
      document.getElementById("navTree").innerHTML = navHtml;

      // Property grid rows
      const blue = "text-[#0000ff]", gray = "text-[#808080]";
      const props = [
        ["1", "名称", "KL-2", blue, false],
        ["2", "类别", "楼层框架梁", blue, true],
        ["3", "截面形状", "异形", "sel", true],
        ["4", "截面宽度(mm)", "500", gray, true],
        ["5", "截面高度(mm)", "500", gray, true],
        ["6", "轴线距梁左边线距", "(250)", "", true],
        ["7", "跨数量", "", "", true],
        ["8", "上部通长筋", "2Φ25", blue, true],
        ["9", "下部通长筋", "4Φ25", blue, true],
        ["10", "侧面构造或受扭筋", "", blue, true],
        ["11", "其它箍筋", "", blue, false],
        ["12", "备注", "", "", true],
        ["13", "其它属性", "", "plus", false],
        ["21", "锚固搭接", "", "plus", false],
        ["36", "显示样式", "", "plus", false],
      ];
      document.getElementById("propRows").innerHTML = props.map(([n, name, val, tone, box]) => {
        const sel = tone === "sel", plus = tone === "plus";
        const nameTone = sel ? "!bg-[#0078d7] text-white" : plus ? "relative " + gray : tone;
        const mark = plus ? `<span class="absolute top-[4px] left-[3px] flex size-[11px] items-center justify-center border border-[#aaa] text-[11px] leading-none text-[#333]">+</span>` : "";
        const check = box ? `<span class="mx-auto block size-[13px] border border-[#444]"></span>` : "";
        return `<tr><td class="${sel ? "!bg-[#f9cf8a] text-[#c04000]" : ""}">${n}</td><td class="${nameTone}">${mark}${name}</td><td class="${sel ? "bg-[#d9e9f7]" : ""} ${tone === gray ? gray : ""}">${val}</td><td>${check}</td></tr>`;
      }).join("");
    </script>
  </body>
</html>
